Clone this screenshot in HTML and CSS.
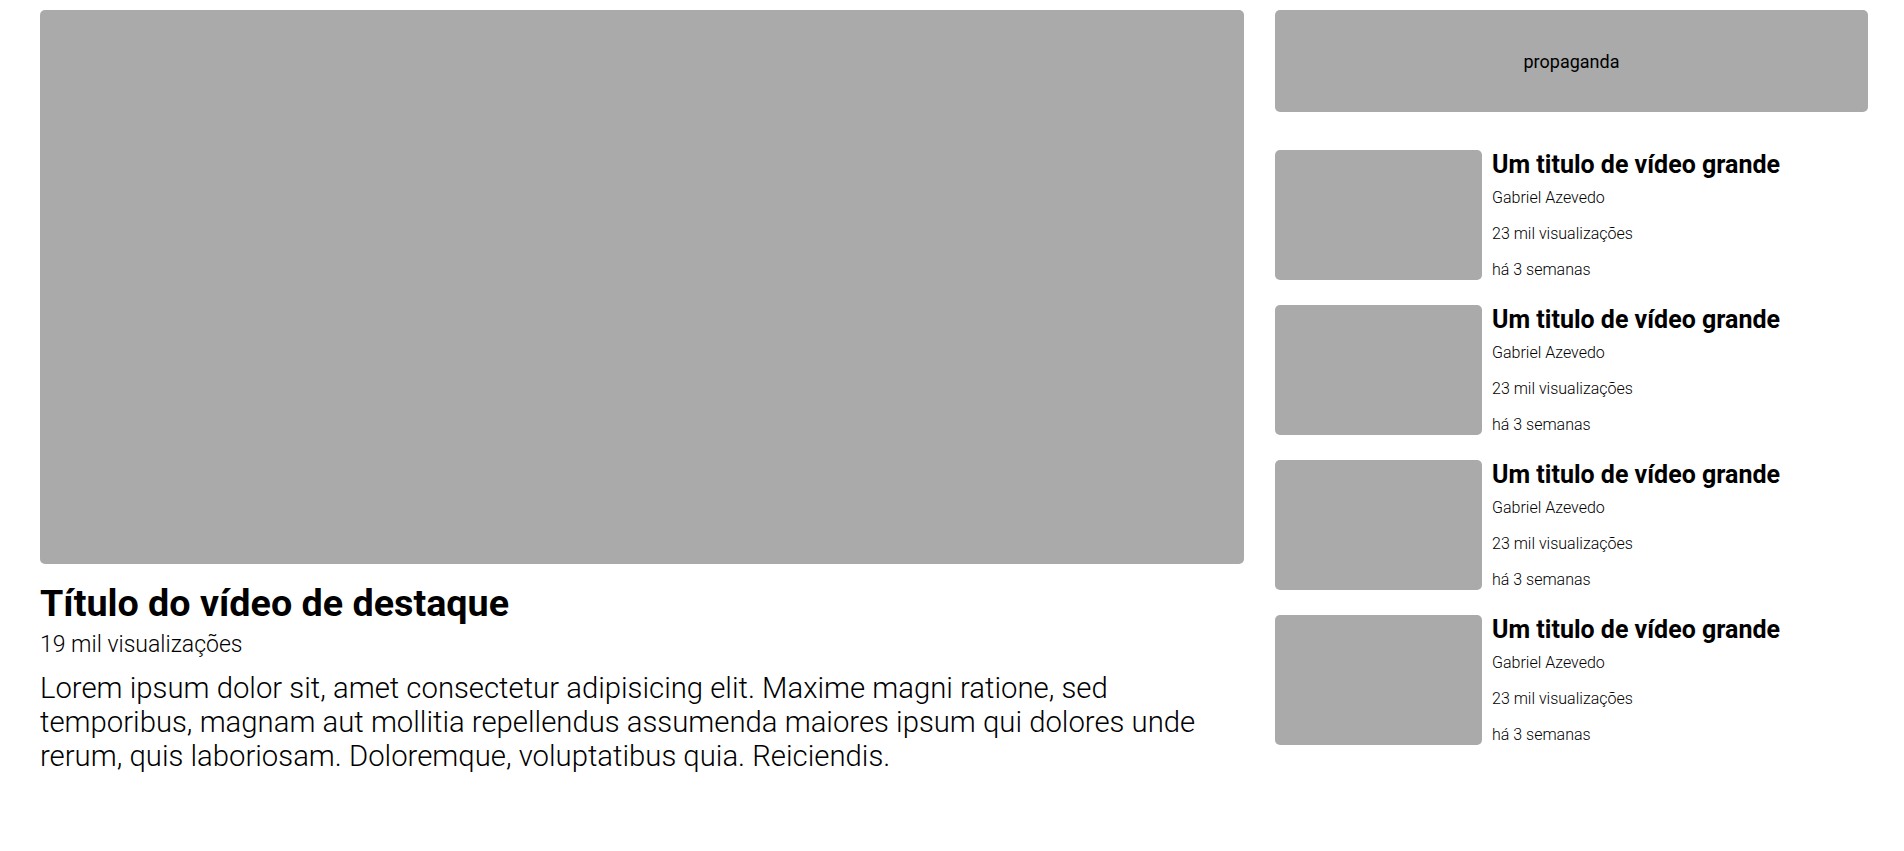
FILE: index.html
```html
<!DOCTYPE html>
<html lang="pt-BR">
<head>
<meta charset="utf-8">
<title>Vídeos</title>
<link rel="stylesheet" href="styles.css">
</head>
<body>
<div class="page">
  <main class="featured">
    <div class="player"></div>
    <h1 class="featured-title">Título do vídeo de destaque</h1>
    <p class="featured-views">19 mil visualizações</p>
    <p class="featured-desc">Lorem ipsum dolor sit, amet consectetur adipisicing elit. Maxime magni ratione, sed temporibus, magnam aut mollitia repellendus assumenda maiores ipsum qui dolores unde rerum, quis laboriosam. Doloremque, voluptatibus quia. Reiciendis.</p>
  </main>
  <aside class="sidebar">
    <div class="ad">propaganda</div>
    <ul class="list">
      <li class="card">
        <div class="thumb"></div>
        <div class="info">
          <h2 class="card-title">Um titulo de vídeo grande</h2>
          <p class="meta first">Gabriel Azevedo</p>
          <p class="meta">23 mil visualizações</p>
          <p class="meta">há 3 semanas</p>
        </div>
      </li>
      <li class="card">
        <div class="thumb"></div>
        <div class="info">
          <h2 class="card-title">Um titulo de vídeo grande</h2>
          <p class="meta first">Gabriel Azevedo</p>
          <p class="meta">23 mil visualizações</p>
          <p class="meta">há 3 semanas</p>
        </div>
      </li>
      <li class="card">
        <div class="thumb"></div>
        <div class="info">
          <h2 class="card-title">Um titulo de vídeo grande</h2>
          <p class="meta first">Gabriel Azevedo</p>
          <p class="meta">23 mil visualizações</p>
          <p class="meta">há 3 semanas</p>
        </div>
      </li>
      <li class="card">
        <div class="thumb"></div>
        <div class="info">
          <h2 class="card-title">Um titulo de vídeo grande</h2>
          <p class="meta first">Gabriel Azevedo</p>
          <p class="meta">23 mil visualizações</p>
          <p class="meta">há 3 semanas</p>
        </div>
      </li>
    </ul>
  </aside>
</div>
</body>
</html>
```

FILE: styles.css
```css
* { box-sizing: border-box; }

body {
  margin: 0;
  background: #fff;
  color: #000;
  font-family: Roboto, "Liberation Sans", Arial, sans-serif;
}

.page {
  display: grid;
  grid-template-columns: 1fr 593px;
  column-gap: 31px;
  padding: 10px 36px 0 40px;
  align-items: start;
}

.player {
  height: 554px;
  background: #aaa;
  border-radius: 5px;
}

.featured-title {
  margin: 17px 0 0;
  font-size: 37.7px;
  font-weight: 700;
  line-height: normal;
}

.featured-views {
  margin: 6px 0 0;
  font-size: 23px;
  font-weight: 300;
  line-height: normal;
}

.featured-desc {
  margin: 13px 0 0;
  font-size: 29.3px;
  font-weight: 300;
  line-height: 34px;
}

.ad {
  height: 102px;
  background: #aaa;
  border-radius: 5px;
  display: flex;
  align-items: center;
  justify-content: center;
  font-size: 18px;
  font-weight: 400;
}

.list {
  list-style: none;
  margin: 38px 0 0;
  padding: 0;
  display: flex;
  flex-direction: column;
  gap: 25px;
}

.card {
  display: flex;
  gap: 10px;
}

.thumb {
  width: 207px;
  height: 130px;
  flex: none;
  background: #aaa;
  border-radius: 5px;
}

.card-title {
  margin: 0;
  font-size: 25px;
  font-weight: 700;
  line-height: normal;
}

.meta {
  margin: 17px 0 0;
  font-size: 16px;
  font-weight: 300;
  line-height: normal;
}

.meta.first {
  margin-top: 9px;
}
```
